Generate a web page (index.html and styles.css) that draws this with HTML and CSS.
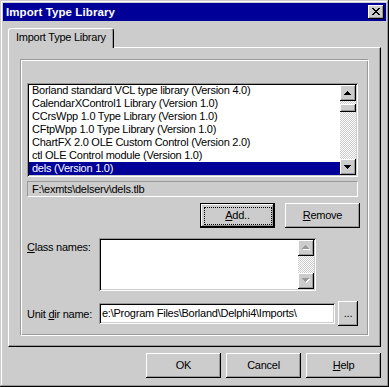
FILE: index.html
```html
<!DOCTYPE html>
<html>
<head>
<meta charset="utf-8">
<link rel="stylesheet" href="styles.css">
</head>
<body>
<div class="window">
  <div class="titlebar">
    <span class="title">Import Type Library</span>
    <div class="close">
      <svg width="8" height="7" viewBox="0 0 8 7" shape-rendering="crispEdges"><path d="M0 0h2v1H0zM6 0h2v1H6zM1 1h2v1H1zM5 1h2v1H5zM2 2h4v1H2zM3 3h2v1H3zM2 4h4v1H2zM1 5h2v1H1zM5 5h2v1H5zM0 6h2v1H0zM6 6h2v1H6z" fill="#000"/></svg>
    </div>
  </div>
  <div class="tabs"><div class="tab">Import Type Library</div></div>
  <div class="page">
    <div class="group">
      <div class="listbox">
        <div class="items">
          <div class="item">Borland standard VCL type library (Version 4.0)</div>
          <div class="item">CalendarXControl1 Library (Version 1.0)</div>
          <div class="item">CCrsWpp 1.0 Type Library (Version 1.0)</div>
          <div class="item">CFtpWpp 1.0 Type Library (Version 1.0)</div>
          <div class="item">ChartFX 2.0 OLE Custom Control (Version 2.0)</div>
          <div class="item">ctl OLE Control module (Version 1.0)</div>
          <div class="item selected">dels (Version 1.0)</div>
        </div>
        <div class="vscroll">
          <div class="sbtn"><svg width="7" height="4" viewBox="0 0 7 4" shape-rendering="crispEdges"><path d="M3 0h1v1h1v1h1v1h1v1H0V3h1V2h1V1h1z" fill="#000"/></svg></div>
          <div class="track"><div class="thumb"></div></div>
          <div class="sbtn"><svg width="7" height="4" viewBox="0 0 7 4" shape-rendering="crispEdges"><path d="M0 0h7v1H6v1H5v1H4v1H3V3H2V2H1V1H0z" fill="#000"/></svg></div>
        </div>
      </div>
      <div class="pathpanel">F:\exmts\delserv\dels.tlb</div>
      <div class="actions">
        <button class="btn default"><u>A</u>dd..</button>
        <button class="btn"><u>R</u>emove</button>
      </div>
      <div class="row classrow">
        <div class="label"><u>C</u>lass names:</div>
        <div class="classbox">
          <div class="classlist"></div>
          <div class="vscroll">
            <div class="sbtn"><svg width="8" height="5" viewBox="0 0 8 5" shape-rendering="crispEdges"><path d="M4 1h1v1h1v1h1v1h1v1H1V4h1V3h1V2h1z" fill="#fff"/><path d="M3 0h1v1h1v1h1v1h1v1H0V3h1V2h1V1h1z" fill="#999"/></svg></div>
            <div class="track"></div>
            <div class="sbtn"><svg width="8" height="5" viewBox="0 0 8 5" shape-rendering="crispEdges"><path d="M1 1h7v1H7v1H6v1H5v1H4V4H3V3H2V2H1z" fill="#fff"/><path d="M0 0h7v1H6v1H5v1H4v1H3V3H2V2H1V1H0z" fill="#999"/></svg></div>
          </div>
        </div>
      </div>
      <div class="row unitrow">
        <div class="label">Unit <u>d</u>ir name:</div>
        <div class="edit">e:\Program Files\Borland\Delphi4\Imports\</div>
        <button class="btn small">...</button>
      </div>
    </div>
  </div>
  <div class="buttons">
    <button class="btn">OK</button>
    <button class="btn">Cancel</button>
    <button class="btn"><u>H</u>elp</button>
  </div>
</div>
</body>
</html>
```
FILE: styles.css
```css
* { box-sizing: border-box; }
html, body {
  margin: 0;
  padding: 0;
  width: 389px;
  height: 387px;
  overflow: hidden;
  background: #cccccc;
}
body {
  font-family: "Liberation Sans", Arial, sans-serif;
  font-size: 11px;
  letter-spacing: -0.25px;
  color: #000;
}
.window {
  width: 389px;
  height: 387px;
  padding: 3px;
  background: #cccccc;
  box-shadow: inset -1px -1px #000, inset 1px 1px #ccc, inset -2px -2px #999, inset 2px 2px #fff;
  display: flex;
  flex-direction: column;
}
.titlebar {
  height: 18px;
  background: #000099;
  color: #fff;
  display: flex;
  align-items: center;
  justify-content: space-between;
  padding: 0 2px 0 3px;
}
.title {
  font-weight: bold;
  font-size: 11.5px;
  letter-spacing: 0.1px;
}
.close {
  width: 16px;
  height: 14px;
  background: #ccc;
  box-shadow: inset -1px -1px #000, inset 1px 1px #fff, inset -2px -2px #999;
  display: flex;
  align-items: center;
  justify-content: center;
  padding: 0 1px 1px 0;
}
.close svg { display: block; }
.tabs {
  margin: 7px 0 0 5px;
  display: flex;
  position: relative;
  z-index: 1;
}
.tab {
  width: 106px;
  height: 20px;
  margin-bottom: -1px;
  background: #ccc;
  border-top: 1px solid #fff;
  border-left: 1px solid #fff;
  border-right: 1px solid #000;
  border-radius: 3px 3px 0 0;
  box-shadow: inset -1px 0 #999;
  padding-left: 7px;
  line-height: 17px;
}
.page {
  margin: 0 5px;
  height: 300px;
  border: 1px solid;
  border-color: #fff #000 #000 #fff;
  box-shadow: inset -1px -1px #999;
  padding: 11px 11px 10px 11px;
}
.group {
  width: 349px;
  height: 277px;
  border: 1px solid;
  border-color: #999 #fff #fff #999;
  box-shadow: inset 1px 1px #fff, inset -1px -1px #999;
  padding: 23px 8px 0 6px;
  display: flex;
  flex-direction: column;
}
.listbox {
  width: 331px;
  height: 94px;
  padding: 2px;
  background: #fff;
  box-shadow: inset 1px 1px #999, inset -1px -1px #fff, inset 2px 2px #000, inset -2px -2px #ccc;
  display: flex;
}
.items {
  flex: 1;
  overflow: hidden;
}
.item {
  height: 13px;
  line-height: 13px;
  padding-left: 3px;
  white-space: nowrap;
}
.item:first-child { margin-top: -1px; }
.item.selected {
  background: #000099;
  color: #fff;
}
.vscroll {
  width: 16px;
  display: flex;
  flex-direction: column;
}
.sbtn {
  width: 16px;
  height: 16px;
  flex: none;
  background: #ccc;
  box-shadow: inset -1px -1px #000, inset 1px 1px #fff, inset -2px -2px #999;
  display: flex;
  align-items: center;
  justify-content: center;
  padding: 0 1px 1px 0;
}
.sbtn svg { display: block; }
.track {
  flex: 1;
  background-image: conic-gradient(#fff 25%, #ccc 0 50%, #fff 0 75%, #ccc 0);
  background-size: 2px 2px;
  padding-top: 3px;
}
.thumb {
  height: 8px;
  background: #ccc;
  box-shadow: inset -1px -1px #000, inset 1px 1px #fff, inset -2px -2px #999;
}
.pathpanel {
  margin-top: 4px;
  width: 331px;
  height: 16px;
  border: 1px solid;
  border-color: #999 #fff #fff #999;
  padding-left: 4px;
  line-height: 14px;
  white-space: nowrap;
}
.actions {
  margin-top: 6px;
  display: flex;
  justify-content: flex-end;
  gap: 10px;
}
.btn {
  width: 75px;
  height: 25px;
  margin: 0;
  padding: 0;
  border: 0;
  background: #ccc;
  box-shadow: inset -1px -1px #000, inset 1px 1px #fff, inset -2px -2px #999;
  font: inherit;
  letter-spacing: inherit;
  color: #000;
  text-align: center;
  line-height: 23px;
}
.btn.default {
  position: relative;
  box-shadow: inset 0 0 0 1px #000, inset -2px -2px #000, inset 2px 2px #fff, inset -3px -3px #999;
}
.btn.default::after {
  content: "";
  position: absolute;
  left: 4px;
  top: 4px;
  right: 3px;
  bottom: 3px;
  border: 1px dotted #000;
}
.btn.small {
  width: 20px;
  height: 25px;
}
.row {
  display: flex;
}
.label {
  width: 72px;
  flex: none;
  white-space: nowrap;
}
.classrow {
  margin-top: 10px;
  align-items: flex-start;
}
.classrow .label { padding-top: 3px; }
.classbox {
  width: 217px;
  height: 53px;
  padding: 2px;
  background: #fff;
  box-shadow: inset 1px 1px #999, inset -1px -1px #fff, inset 2px 2px #000, inset -2px -2px #ccc;
  display: flex;
}
.classlist { flex: 1; }
.unitrow {
  margin-top: 10px;
  align-items: center;
  height: 25px;
}
.edit {
  width: 236px;
  height: 21px;
  padding: 2px 0 0 3px;
  background: #fff;
  box-shadow: inset 1px 1px #999, inset -1px -1px #fff, inset 2px 2px #000, inset -2px -2px #ccc;
  line-height: 16px;
  white-space: nowrap;
  margin-right: 3px;
}
.buttons {
  margin: 6px 5px 0 0;
  display: flex;
  justify-content: flex-end;
  gap: 5px;
}
```
